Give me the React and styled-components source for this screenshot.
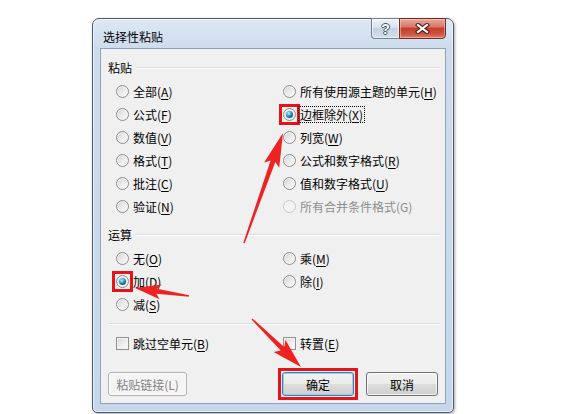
import React from "react";
import styled, { createGlobalStyle } from "styled-components";

const GlobalStyle = createGlobalStyle`
  html, body {
    margin: 0;
    padding: 0;
    background: #fff;
  }
  body {
    font-family: "Noto Sans CJK SC", "Liberation Sans", sans-serif;
    font-size: 12px;
    color: #000;
  }
`;

const pasteLeft = [
  { text: "全部", key: "A" },
  { text: "公式", key: "F" },
  { text: "数值", key: "V" },
  { text: "格式", key: "T" },
  { text: "批注", key: "C" },
  { text: "验证", key: "N" },
];

const pasteRight = [
  { text: "所有使用源主题的单元", key: "H" },
  { text: "边框除外", key: "X", checked: true, focused: true, marked: true },
  { text: "列宽", key: "W" },
  { text: "公式和数字格式", key: "R" },
  { text: "值和数字格式", key: "U" },
  { text: "所有合并条件格式", key: "G", disabled: true },
];

const opRows = [
  [{ text: "无", key: "O" }, { text: "乘", key: "M" }],
  [{ text: "加", key: "D", checked: true, marked: true }, { text: "除", key: "I" }],
  [{ text: "减", key: "S" }, null],
];

// tapered annotation arrow, tail -> tip
const arrow = (tx, ty, px, py, head, headW, w0 = 1.5, w1 = 5) => {
  const dx = px - tx;
  const dy = py - ty;
  const len = Math.hypot(dx, dy);
  const ux = dx / len;
  const uy = dy / len;
  const nx = -uy;
  const ny = ux;
  const bx = px - ux * head;
  const by = py - uy * head;
  const pts = [
    [tx + (nx * w0) / 2, ty + (ny * w0) / 2],
    [bx + (nx * w1) / 2, by + (ny * w1) / 2],
    [bx - ux * 4 + (nx * headW) / 2, by - uy * 4 + (ny * headW) / 2],
    [px, py],
    [bx - ux * 4 - (nx * headW) / 2, by - uy * 4 - (ny * headW) / 2],
    [bx - (nx * w1) / 2, by - (ny * w1) / 2],
    [tx - (nx * w0) / 2, ty - (ny * w0) / 2],
  ];
  return pts.map((p) => p.map((v) => v.toFixed(1)).join(",")).join(" ");
};

const arrows = [
  arrow(244, 243, 283, 133, 30, 16),
  arrow(189, 296, 135, 288, 22, 15),
  arrow(252, 319, 301, 367, 26, 17),
];

const App = () => {
  return (
    <Page>
      <GlobalStyle />
      <Window>
        <TitleBar>
          <Title>选择性粘贴</Title>
          <CaptionButtons>
            <HelpButton>?</HelpButton>
            <CloseButton>
              <svg width="15" height="11" viewBox="0 0 15 11">
                <path d="M3 2 L12 9 M12 2 L3 9" stroke="#4a1c14" strokeWidth="4.2" strokeLinecap="square" />
                <path d="M3 2 L12 9 M12 2 L3 9" stroke="#fff" strokeWidth="2.2" strokeLinecap="square" />
              </svg>
            </CloseButton>
          </CaptionButtons>
        </TitleBar>

        <Client>
          <SectionHeader>粘贴</SectionHeader>
          <OptionGrid>
            {pasteLeft.map((l, i) => (
              <React.Fragment key={l.key}>
                <Option opt={l} />
                <Option opt={pasteRight[i]} />
              </React.Fragment>
            ))}
          </OptionGrid>

          <SectionHeader $gap={8}>运算</SectionHeader>
          <OptionGrid>
            {opRows.map((row, i) => (
              <React.Fragment key={i}>
                <Option opt={row[0]} />
                {row[1] ? <Option opt={row[1]} /> : <span />}
              </React.Fragment>
            ))}
          </OptionGrid>

          <Separator />

          <OptionGrid $top={8}>
            <Choice>
              <CheckBox />
              <Label>
                跳过空单元(<Key>B</Key>)
              </Label>
            </Choice>
            <Choice>
              <CheckBox />
              <Label>
                转置(<Key>E</Key>)
              </Label>
            </Choice>
          </OptionGrid>

          <ButtonRow>
            <Button $disabled $width={79}>
              粘贴链接(L)
            </Button>
            <Mark $offset={1}>
              <Button $default>确定</Button>
            </Mark>
            <Button>取消</Button>
          </ButtonRow>
        </Client>
      </Window>

      <Overlay width="566" height="414" viewBox="0 0 566 414">
        {arrows.map((p, i) => (
          <polygon key={i} points={p} fill="#ee2222" />
        ))}
      </Overlay>
    </Page>
  );
};

const Option = ({ opt }) => {
  const radio = <Radio $checked={opt.checked} $disabled={opt.disabled} />;
  return (
    <Choice $disabled={opt.disabled}>
      {opt.marked ? <Mark $offset={1}>{radio}</Mark> : radio}
      <Label $focused={opt.focused}>
        {opt.text}({opt.disabled ? opt.key : <Key>{opt.key}</Key>})
      </Label>
    </Choice>
  );
};

const Page = styled.div`
  position: relative;
  width: 566px;
  height: 414px;
  box-sizing: border-box;
  padding: 18px 0 0 92px;
  overflow: hidden;
`;

const Window = styled.div`
  width: 362px;
  height: 395px;
  box-sizing: border-box;
  display: flex;
  flex-direction: column;
  border: 1px solid #4f5b6a;
  border-radius: 7px 7px 5px 5px;
  background: linear-gradient(180deg, #dde8f4 0px, #cddced 30px, #c6d7eb 100%);
  box-shadow: inset 0 0 0 1px rgba(255, 255, 255, 0.55),
    1px 1px 3px rgba(0, 0, 0, 0.35);
`;

const TitleBar = styled.div`
  height: 29px;
  flex-shrink: 0;
  display: flex;
  align-items: flex-start;
  padding-left: 10px;
`;

const Title = styled.div`
  line-height: 29px;
  padding-top: 3px;
  color: #000;
`;

const CaptionButtons = styled.div`
  margin-left: auto;
  margin-right: 7px;
  margin-top: -1px;
  display: flex;
`;

const HelpButton = styled.div`
  width: 28px;
  height: 21px;
  box-sizing: border-box;
  border: 1px solid #6f7f95;
  border-right: none;
  border-radius: 0 0 0 4px;
  background: linear-gradient(180deg, #eef2f8 0%, #d9e3ef 45%, #c3d2e4 50%, #d3dfec 100%);
  box-shadow: inset 0 0 0 1px rgba(255, 255, 255, 0.6);
  display: flex;
  align-items: center;
  justify-content: center;
  font-family: "Liberation Sans", sans-serif;
  font-weight: bold;
  font-size: 14px;
  color: #fff;
  text-shadow: 0 0 1px #3d4756, 1px 0 0 #4d5868, -1px 0 0 #4d5868, 0 1px 0 #4d5868,
    0 -1px 0 #4d5868;
`;

const CloseButton = styled.div`
  width: 47px;
  height: 21px;
  box-sizing: border-box;
  border: 1px solid #6a2f27;
  border-radius: 0 0 4px 0;
  background: linear-gradient(180deg, #e8a99c 0%, #d7796a 40%, #c33f2b 50%, #cf5440 80%, #dc8170 100%);
  box-shadow: inset 0 0 0 1px rgba(255, 220, 210, 0.45);
  display: flex;
  align-items: center;
  justify-content: center;
`;

const Client = styled.div`
  flex: 1;
  margin: 0 7px 8px;
  border: 1px solid #8fa2ba;
  background: #f0f0f0;
  padding: 10px 5px 0 7px;
  display: flex;
  flex-direction: column;
`;

const SectionHeader = styled.div`
  height: 16px;
  margin-top: ${(p) => p.$gap || 0}px;
  display: flex;
  align-items: center;
  gap: 4px;
  &::after {
    content: "";
    flex: 1;
    height: 1px;
    background: #d5dfe5;
    box-shadow: 0 1px 0 #fff;
  }
`;

const OptionGrid = styled.div`
  display: grid;
  grid-template-columns: 167px 1fr;
  grid-auto-rows: 23px;
  margin-top: ${(p) => (p.$top === undefined ? 5 : p.$top)}px;
  padding-left: 8px;
`;

const Choice = styled.div`
  display: flex;
  align-items: center;
  gap: 4px;
  color: ${(p) => (p.$disabled ? "#8d8d8d" : "#000")};
  white-space: nowrap;
`;

const Label = styled.span`
  line-height: 15px;
  outline: ${(p) => (p.$focused ? "1px dotted #000" : "none")};
  outline-offset: 0px;
  padding: 0 1px;
  margin-left: -1px;
`;

const Key = styled.span`
  text-decoration: underline;
  text-underline-offset: 2px;
`;

const Mark = styled.span`
  display: flex;
  flex-shrink: 0;
  outline: 3px solid #e5141b;
  outline-offset: ${(p) => p.$offset}px;
`;

const Radio = styled.span`
  position: relative;
  flex-shrink: 0;
  width: 13px;
  height: 13px;
  box-sizing: border-box;
  border-radius: 50%;
  border: 1px solid ${(p) => (p.$disabled ? "#c9c9c9" : "#8c8c8c")};
  background: ${(p) =>
    p.$disabled
      ? "#f2f2f2"
      : "linear-gradient(135deg, #cfcfcf 0%, #e9e9e9 45%, #fbfbfb 100%)"};
  box-shadow: inset 0 0 0 1px ${(p) => (p.$disabled ? "#f6f6f6" : "#f5f5f5")};
  &::after {
    content: "";
    display: ${(p) => (p.$checked ? "block" : "none")};
    position: absolute;
    inset: 2px;
    border-radius: 50%;
    background: radial-gradient(
      circle at 38% 32%,
      #c6f1fc 0%,
      #4fb6d8 30%,
      #176a92 62%,
      #0b344c 100%
    );
  }
`;

const CheckBox = styled.span`
  flex-shrink: 0;
  width: 13px;
  height: 13px;
  box-sizing: border-box;
  border: 1px solid #8e8f8f;
  background: linear-gradient(135deg, #d4d4d4 0%, #ececec 50%, #fcfcfc 100%);
  box-shadow: inset 0 0 0 1px #f4f4f4;
`;

const Separator = styled.div`
  height: 1px;
  margin-top: 7px;
  background: #d5dfe5;
  box-shadow: 0 1px 0 #fff;
`;

const ButtonRow = styled.div`
  display: flex;
  gap: 12px;
  margin-top: 17px;
  margin-right: 2px;
  & > :first-child {
    margin-right: auto;
  }
`;

const Button = styled.div`
  width: ${(p) => p.$width || 72}px;
  height: 24px;
  box-sizing: border-box;
  display: flex;
  align-items: center;
  justify-content: center;
  border-radius: 3px;
  border: 1px solid
    ${(p) => (p.$disabled ? "#adb2b5" : p.$default ? "#3c7fb1" : "#707070")};
  background: ${(p) =>
    p.$disabled
      ? "#f4f4f4"
      : "linear-gradient(180deg, #f2f2f2 0%, #ebebeb 48%, #dddddd 52%, #cfcfcf 100%)"};
  box-shadow: inset 0 0 0 1px
    ${(p) => (p.$default ? "#8fd0f2" : "rgba(255, 255, 255, 0.75)")};
  color: ${(p) => (p.$disabled ? "#838383" : "#000")};
`;

const Overlay = styled.svg`
  position: absolute;
  top: 0;
  left: 0;
  pointer-events: none;
`;

export default App;
